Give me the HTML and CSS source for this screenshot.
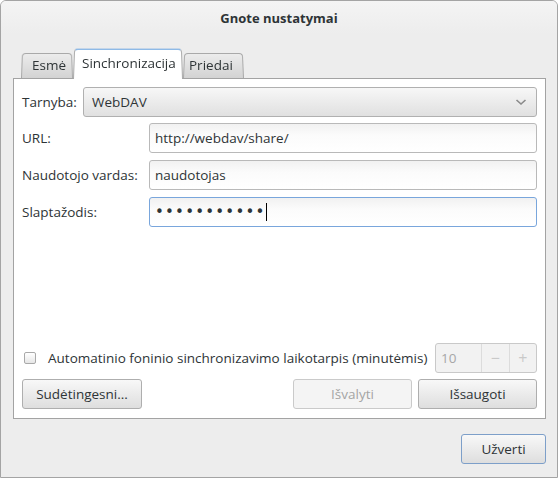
FILE: index.html
```html
<!DOCTYPE html>
<html lang="lt">
<head>
<meta charset="utf-8">
<title>Gnote nustatymai</title>
<link rel="stylesheet" href="styles.css">
</head>
<body>
<div class="window">
  <div class="titlebar">Gnote nustatymai</div>
  <div class="content">
    <div class="tabs">
      <div class="tab tab-esme">Esmė</div>
      <div class="tab tab-sync active">Sinchronizacija</div>
      <div class="tab tab-priedai">Priedai</div>
    </div>
    <div class="panel">
      <div class="service-row">
        <span class="label service-label">Tarnyba:</span>
        <div class="combo">
          <span>WebDAV</span>
          <svg class="chevron" width="12" height="8" viewBox="0 0 12 8"><polyline points="1.5,2 6,6 10.5,2" fill="none" stroke="#8a8a8a" stroke-width="1.6"/></svg>
        </div>
      </div>
      <div class="form-grid">
        <span class="label">URL:</span>
        <div class="entry">http://webdav/share/</div>
        <span class="label">Naudotojo vardas:</span>
        <div class="entry">naudotojas</div>
        <span class="label">Slaptažodis:</span>
        <div class="entry focused"><span class="dots">•••••••••••</span><span class="cursor"></span></div>
      </div>
      <div class="spacer"></div>
      <div class="auto-row">
        <span class="checkbox"></span>
        <span class="auto-label">Automatinio foninio sinchronizavimo laikotarpis (minutėmis)</span>
        <div class="spin">
          <span class="spin-value">10</span>
          <span class="spin-btn">−</span>
          <span class="spin-btn">+</span>
        </div>
      </div>
      <div class="button-row">
        <button class="btn btn-adv">Sudėtingesni...</button>
        <div class="grow"></div>
        <button class="btn btn-wide disabled">Išvalyti</button>
        <button class="btn btn-wide">Išsaugoti</button>
      </div>
    </div>
    <div class="actions">
      <button class="btn btn-close">Užverti</button>
    </div>
  </div>
</div>
</body>
</html>
```

FILE: styles.css
```css
html, body {
  margin: 0;
  padding: 0;
  background: #ffffff;
}

body {
  font-family: "Open Sans", "DejaVu Sans", sans-serif;
  font-size: 13.5px;
  color: #2e3436;
}

.window {
  width: 556px;
  height: 476px;
  border: 1px solid #a4a4a4;
  border-radius: 6px 6px 0 0;
  background: #ededed;
  display: flex;
  flex-direction: column;
  overflow: hidden;
}

.titlebar {
  height: 33px;
  display: flex;
  align-items: center;
  justify-content: center;
  font-weight: bold;
  font-size: 13px;
  background: linear-gradient(#f4f4f4, #ededed);
}

.content {
  flex: 1;
  display: flex;
  flex-direction: column;
  padding: 14px 11px 0 12px;
}

.tabs {
  display: flex;
  align-items: flex-end;
  height: 30px;
  padding-left: 8px;
}

.tab {
  position: relative;
  z-index: 0;
  height: 26px;
  box-sizing: border-box;
  display: flex;
  align-items: center;
  line-height: 1;
}

.tab::before {
  content: "";
  position: absolute;
  left: 0;
  right: 0;
  top: 0;
  bottom: 0;
  z-index: -1;
  border: 1px solid #a9a9a9;
  border-bottom: none;
  border-radius: 4px 4px 0 0;
  background: linear-gradient(#ececec, #d3d3d3);
  transform: perspective(60px) rotateX(5deg);
  transform-origin: 50% 100%;
}

.tab-esme {
  width: 52px;
  padding-left: 11px;
  padding-top: 2px;
}

.tab-sync {
  width: 110px;
  padding-left: 9px;
}

.tab-priedai {
  width: 61px;
  padding-left: 6px;
  padding-top: 2px;
}

.tab.active {
  height: 31px;
  margin-bottom: -1px;
  z-index: 2;
  padding-top: 0;
}

.tab.active::before {
  background: #ffffff;
  border-color: #4a90d9 #a9a9a9 transparent;
  transform: perspective(80px) rotateX(3deg);
}

.panel {
  height: 341px;
  box-sizing: border-box;
  background: #ffffff;
  border: 1px solid #a3a3a3;
  padding: 8px 8px 9px 8px;
  display: flex;
  flex-direction: column;
}

.service-row {
  display: flex;
  align-items: center;
  gap: 6px;
}

.service-label {
  width: 55px;
}

.combo {
  flex: 1;
  height: 30px;
  box-sizing: border-box;
  border: 1px solid #b0b0b0;
  border-radius: 3px;
  background: linear-gradient(#f7f7f7, #e0e0e0);
  display: flex;
  align-items: center;
  justify-content: space-between;
  padding: 0 9px 0 8px;
}

.chevron {
  display: block;
}

.form-grid {
  margin-top: 6px;
  display: grid;
  grid-template-columns: 127px 1fr;
  row-gap: 7px;
  align-items: center;
}

.entry {
  height: 30px;
  box-sizing: border-box;
  border: 1px solid #b9b9b9;
  border-radius: 3px;
  background: linear-gradient(#f1f1f1, #fbfbfb 40%, #ffffff);
  display: flex;
  align-items: center;
  padding-left: 5px;
}

.entry.focused {
  border-color: #79a6dc;
}

.dots {
  font-family: "DejaVu Sans", sans-serif;
  font-size: 15px;
  letter-spacing: 1.2px;
  color: #2e3436;
}

.cursor {
  display: inline-block;
  width: 1px;
  height: 18px;
  background: #000000;
  margin-left: 0;
}

.spacer {
  flex: 1;
}

.auto-row {
  display: flex;
  align-items: center;
  height: 30px;
}

.checkbox {
  width: 12px;
  height: 12px;
  box-sizing: border-box;
  border: 1px solid #a9a9a9;
  border-radius: 2px;
  background: linear-gradient(#ffffff, #e6e6e6);
  margin-left: 2px;
  margin-right: 12px;
}

.auto-label {
  flex: 1;
  white-space: nowrap;
}

.spin {
  width: 102px;
  height: 30px;
  box-sizing: border-box;
  border: 1px solid #c9c9c9;
  border-radius: 3px;
  background: #f2f2f2;
  display: flex;
  color: #a7a7a7;
}

.spin-value {
  width: 45px;
  box-sizing: border-box;
  padding-left: 5px;
  display: flex;
  align-items: center;
}

.spin-btn {
  flex: 1;
  border-left: 1px solid #dcdcdc;
  display: flex;
  align-items: center;
  justify-content: center;
  color: #c9c9c9;
  font-size: 16px;
}

.button-row {
  display: flex;
  gap: 6px;
  margin-top: 6px;
}

.grow {
  flex: 1;
}

.btn {
  height: 30px;
  box-sizing: border-box;
  border: 1px solid #aeaeae;
  border-radius: 3px;
  background: linear-gradient(#f8f8f8, #dedede);
  font-family: "Open Sans", "DejaVu Sans", sans-serif;
  font-size: 13.5px;
  color: #2e3436;
  padding: 0;
  margin: 0;
}

.btn-adv {
  width: 120px;
}

.btn-wide {
  width: 119px;
}

.btn.disabled {
  background: #f4f4f4;
  border-color: #cacaca;
  color: #a4a4a4;
}

.actions {
  display: flex;
  justify-content: flex-end;
  padding-top: 15px;
}

.btn-close {
  width: 85px;
  border-color: #7d9fc9;
}
```
